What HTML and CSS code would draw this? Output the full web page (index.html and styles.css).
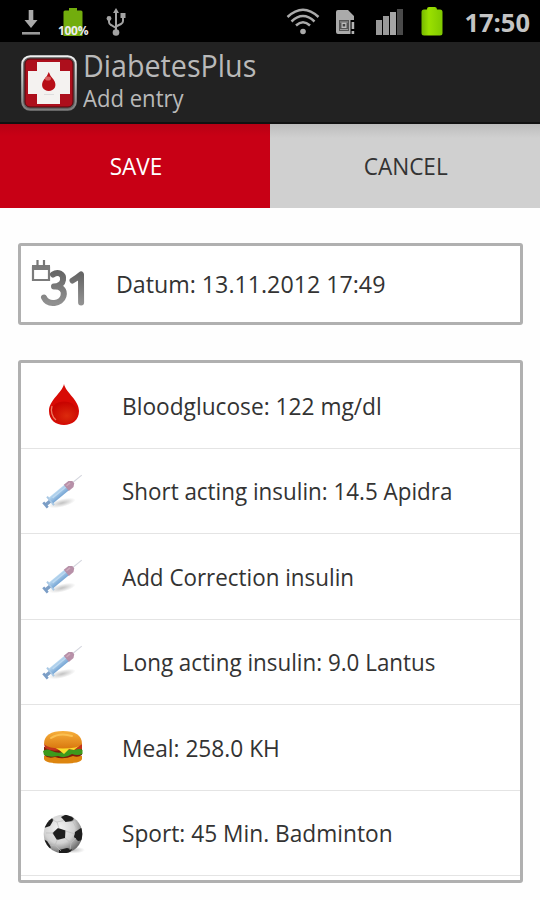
FILE: index.html
```html
<!DOCTYPE html>
<html lang="en">
<head>
    <meta charset="UTF-8">
    <meta name="viewport" content="width=device-width, initial-scale=1.0">
    <title>DiabetesPlus - Add entry</title>
    <link rel="stylesheet" href="styles.css">
</head>
<body>

    <!-- Shared icons and gradients -->
    <svg class="defs" width="0" height="0">
        <defs>
            <linearGradient id="green" x1="0" y1="0" x2="1" y2="0">
                <stop offset="0" stop-color="#76b900"/>
                <stop offset=".35" stop-color="#9be000"/>
                <stop offset="1" stop-color="#7fc800"/>
            </linearGradient>
            <linearGradient id="grey" x1="0" y1="0" x2="0" y2="1">
                <stop offset="0" stop-color="#666"/>
                <stop offset="1" stop-color="#909090"/>
            </linearGradient>
            <linearGradient id="frame" x1="0" y1="0" x2="0" y2="1">
                <stop offset="0" stop-color="#f0f0f0"/>
                <stop offset="1" stop-color="#7c7c7c"/>
            </linearGradient>
            <linearGradient id="barrel" x1="0" y1="0" x2="0" y2="1">
                <stop offset="0" stop-color="#b9d8f0"/>
                <stop offset="1" stop-color="#76a5d4"/>
            </linearGradient>
            <linearGradient id="bun" x1="0" y1="0" x2="0" y2="1">
                <stop offset="0" stop-color="#f7b03c"/>
                <stop offset="1" stop-color="#d9780f"/>
            </linearGradient>
            <radialGradient id="blood" cx=".6" cy=".65" r=".6">
                <stop offset="0" stop-color="#dc2a0c"/>
                <stop offset="1" stop-color="#c80400"/>
            </radialGradient>
            <radialGradient id="leather" cx=".4" cy=".35" r=".65">
                <stop offset="0" stop-color="#f4f4f4"/>
                <stop offset=".6" stop-color="#d2d2d2"/>
                <stop offset="1" stop-color="#707070"/>
            </radialGradient>
            <radialGradient id="shade">
                <stop offset="0" stop-color="#999" stop-opacity=".6"/>
                <stop offset="1" stop-color="#999" stop-opacity="0"/>
            </radialGradient>
            <clipPath id="ball"><circle cx="20" cy="20" r="19.3"/></clipPath>
            <symbol id="syringe" viewBox="0 0 42 38">
                <ellipse cx="20" cy="31" rx="14" ry="4" fill="url(#shade)" transform="rotate(-14 20 31)"/>
                <g transform="translate(3.5 33) rotate(-39.5)">
                    <path d="M33 0H47" stroke="#d3d5dd" stroke-width="1"/>
                    <path d="M0 0H8" stroke="#7d9fc6" stroke-width="3.5"/>
                    <path d="M0 -3.5V3.5" stroke="#7a9dc6" stroke-width="2.6"/>
                    <path d="M6.5 -5.5V5.5" stroke="#a9c8e4" stroke-width="2"/>
                    <rect x="7" y="-3.5" width="22" height="7" fill="url(#barrel)"/>
                    <path d="M10 -1H27" stroke="#bcd8f0" stroke-width="1.4"/>
                    <path d="M27 -4H33L36 -1.5V1.5L33 4H27Z" fill="#b790a8"/>
                    <path d="M28.5 -1.5H33" stroke="#cfaabb" stroke-width="1.5"/>
                </g>
            </symbol>
        </defs>
    </svg>

    <div class="status-bar">
        <div class="status-left">
            <svg class="icon-download" width="20" height="26" viewBox="0 0 20 26">
                <path d="M7.7 0H12.3V10H16.5L10 18L3.5 10H7.7Z" fill="#aaa"/>
                <rect x="1" y="22" width="18" height="2.6" fill="#999"/>
            </svg>
            <div class="battery-full">
                <svg width="20" height="28" viewBox="0 0 20 28">
                    <path d="M6 0H14V2.5H18Q19.500 2.500 19.500 4V28H.5V4Q.5 2.500 2 2.500H6Z" fill="#72ad0d"/>
                </svg>
                <span class="percent">100%</span>
            </div>
            <svg class="icon-usb" width="20" height="28" viewBox="0 0 20 28">
                <g fill="none" stroke="#a3a3a3" stroke-width="2">
                    <path d="M10 3V24"/>
                    <path d="M3 11V14Q3 16 5 17L10 20"/>
                    <path d="M17 8V13Q17 15 15 16L10 18.500"/>
                </g>
                <g fill="#a3a3a3">
                    <path d="M10 0L13 5H7Z"/>
                    <circle cx="10" cy="24.500" r="3.3"/>
                    <circle cx="3" cy="10.500" r="2.4"/>
                    <rect x="14.500" y="5" width="5" height="5"/>
                </g>
            </svg>
        </div>
        <div class="status-right">
            <svg class="icon-wifi" width="34" height="27" viewBox="0 0 34 27">
                <g fill="none" stroke="#aaa" stroke-width="2.5">
                    <path d="M1.500 9Q17 -5.500 32.500 9"/>
                    <path d="M5.500 13.500Q17 2.500 28.500 13.500"/>
                    <path d="M10 17.500Q17 11 24 17.500"/>
                </g>
                <circle cx="17" cy="23.500" r="2.800" fill="#aaa"/>
            </svg>
            <svg class="icon-sim" width="20" height="25" viewBox="0 0 20 25">
                <path d="M2 0H12L18 6V10H14.500V24H2Q0 24 0 22V2Q0 0 2 0Z" fill="#aaa"/>
                <rect x="3" y="10" width="10" height="11" fill="#555"/>
                <rect x="5.500" y="12.500" width="5" height="5.500" fill="#bbb"/>
                <path d="M4 12H12M4 19.500H12" stroke="#999"/>
                <rect x="6.700" y="14" width="2.500" height="2.500" fill="#444"/>
                <path d="M16.900 12V19M16.900 21V24" stroke="#b5b5b5" stroke-width="2.600"/>
            </svg>
            <svg class="icon-signal" width="27" height="26" viewBox="0 0 27 26">
                <rect x="0" y="11" width="6" height="15" fill="#999"/>
                <rect x="7" y="7" width="6" height="19" fill="#999"/>
                <rect x="14" y="3" width="6" height="23" fill="#a5a5a5"/>
                <rect x="21" y="0" width="6" height="26" fill="#4a4a4a"/>
            </svg>
            <svg class="icon-battery" width="22" height="29" viewBox="0 0 22 29">
                <path d="M6 2Q6 0 8 0H14Q16 0 16 2.500H19Q21.500 2.500 21.500 5V26Q21.500 28.500 19 28.500H3Q.5 28.500 .5 26V5Q.5 2.500 3 2.500H6Z" fill="url(#green)"/>
            </svg>
            <span class="clock">17:50</span>
        </div>
    </div>

    <div class="header">
        <svg class="logo" width="56" height="56" viewBox="0 0 56 56">
            <rect x="1.200" y="1.200" width="53.600" height="53.600" rx="8" fill="#5a5a5a" stroke="url(#frame)" stroke-width="2"/>
            <rect x="4" y="4" width="48" height="48" rx="5" fill="#ad0f1c" stroke="#50090d"/>
            <path d="M16 7H39V16H49V39H39V49H16V39H7V16H16Z" fill="#f4f2f0"/>
            <path d="M27.800 17Q29 21 32.500 24.500C37 31 33 36 27.800 36S18.500 31 23 24.500Q26.500 21 27.800 17Z" fill="#b80f18"/>
            <ellipse cx="27" cy="23.500" rx="3" ry="2" fill="#d96060"/>
            <path d="M23 39.500H33" stroke="#ddd"/>
        </svg>
        <div class="titles">
            <div class="title"><span class="fit fit-title">DiabetesPlus</span></div>
            <div class="subtitle"><span class="fit fit-subtitle">Add entry</span></div>
        </div>
    </div>

    <div class="actions">
        <button class="save"><span class="fit-button">SAVE</span></button>
        <button class="cancel"><span class="fit-button">CANCEL</span></button>
    </div>

    <div class="card date">
        <svg class="icon-date" width="56" height="50" viewBox="0 0 56 50">
            <path d="M2 9.500H18V22H2Z" fill="#fff" stroke="#7b7b7b" stroke-width="2.200"/>
            <path d="M1 7H19V12H1Z" fill="#7b7b7b"/>
            <path d="M6.500 2V9M13 2V9" stroke="#777" stroke-width="2.200"/>
            <g fill="none" stroke="url(#grey)" stroke-width="6" stroke-linecap="round" stroke-linejoin="round">
                <path d="M22 16.500C27 13 33 16 32 22C31.500 26 28 28 23 28.500C30 28 34 32 32.500 38C30.500 46 17 48 13 39.500"/>
                <path d="M41.500 22.500Q46 20 50 16.500L50.100 44.500"/>
            </g>
        </svg>
        <span class="fit fit-date">Datum: 13.11.2012 17:49</span>
    </div>

    <div class="card list">
        <div class="row">
            <svg class="icon" width="44" height="42" viewBox="0 0 44 42">
                <path d="M23 0C25 9 38 16 38 27C38 36 31 41 23 41S8 36 8 27C8 16 21 9 23 0Z" fill="#d80a05"/>
                <ellipse cx="23" cy="28.500" rx="13.500" ry="11" fill="url(#blood)"/>
                <path d="M11 22C9.500 27 11 33 15 36" fill="none" stroke="#ee7a60" stroke-width="1.300"/>
            </svg>
            <span class="fit fit-wide">Bloodglucose: 122 mg/dl</span>
        </div>
        <div class="row">
            <svg class="icon" width="44" height="38"><use href="#syringe"/></svg>
            <span class="fit fit-row">Short acting insulin: 14.5 Apidra</span>
        </div>
        <div class="row">
            <svg class="icon" width="44" height="38"><use href="#syringe"/></svg>
            <span class="fit fit-row">Add Correction insulin</span>
        </div>
        <div class="row">
            <svg class="icon" width="44" height="38"><use href="#syringe"/></svg>
            <span class="fit fit-row">Long acting insulin: 9.0 Lantus</span>
        </div>
        <div class="row">
            <svg class="icon" width="44" height="34" viewBox="0 0 44 34">
                <path d="M3 26H41V29Q40 33.500 22 33.500T3 29Z" fill="#dd850f"/>
                <path d="M3 17H41V25Q37 28 32 26Q22 30 14 27Q7 29 3 25Z" fill="#7d1c0b"/>
                <path d="M3 14Q21 20 41 14V19Q30 22 20 20Q10 22 4 18Z" fill="#c3351b"/>
                <path d="M2 21Q6 18 11 21Q17 24 22 22Q29 18 34 20Q38 18 41.500 20V24Q36 26 31 24Q24 29 17 26Q9 28 3 25Z" fill="#3c9a1c"/>
                <path d="M13 17L38 16L33 20L28 19L23 24L18 20Z" fill="#fbdc2c"/>
                <path d="M3 14C3 5 10 1 22 1S41 5 41 14Q37 18.500 22 18.500T3 14Z" fill="url(#bun)"/>
                <path d="M10 8Q19 2 31 6" fill="none" stroke="#fbc050" stroke-width="2" stroke-linecap="round"/>
            </svg>
            <span class="fit fit-wide">Meal: 258.0 KH</span>
        </div>
        <div class="row">
            <svg class="icon" width="44" height="40" viewBox="-2 -1 44 40">
                <ellipse cx="30" cy="36" rx="12" ry="3.500" fill="url(#shade)"/>
                <circle cx="20" cy="20" r="19.300" fill="url(#leather)"/>
                <g clip-path="url(#ball)" fill="#1e1e1e">
                    <path d="M9.500 19L15 14L22.500 16.500L22 24L14 26Z"/>
                    <path d="M18 3L24 0L31 2.500L30 7L22.500 8Z"/>
                    <path d="M32 18L38 14H40V26L35 27L31 23Z"/>
                    <path d="M1 14L3.500 8L8 3L10.500 6L7 12Z"/>
                    <path d="M0 25L4 27L8 33L6 36L0 30Z"/>
                    <path d="M16 36L24 34L29 35.500L26 40H16Z"/>
                    <path d="M22.500 17L32 20M16 14.500L14 8L9.500 6M14 8L21 6.500M14.500 25.500L12 31L7 32M12 31L18 37M22 24L28 29L27 36M28 29L33 24M29 6L34 15M10.500 19L3 19" fill="none" stroke="#bbb" stroke-width=".7"/>
                </g>
            </svg>
            <span class="fit fit-wide">Sport: 45 Min. Badminton</span>
        </div>
    </div>

</body>
</html>
```
FILE: styles.css
```css
* {
    box-sizing: border-box;
}
body {
    margin: 0;
    height: 900px;
    overflow: hidden;
    background: #fefefe;
    color: #333;
    font-family: "Open Sans", "Noto Sans", sans-serif;
    font-size: 24px;
}
svg {
    display: block;
    flex: none;
}
.defs {
    position: absolute;
}
/* condenses the text to the width of the phone font */
.fit {
    display: inline-block;
    white-space: nowrap;
    transform-origin: left center;
}
.fit-row {
    transform: scaleX(0.933);
}
.fit-wide {
    transform: scaleX(0.946);
}
.fit-date {
    transform: scaleX(0.967);
}
.fit-title {
    transform: scaleX(0.925);
}
.fit-subtitle {
    transform: scaleX(0.96);
}
.fit-button {
    display: inline-block;
    transform: scaleX(0.94);
}

.status-bar {
    display: flex;
    justify-content: space-between;
    height: 42px;
    padding: 0 10px 0 21px;
    background: #000;
}
.status-left, .status-right {
    display: flex;
    align-items: flex-start;
}
.icon-download {
    margin-top: 10px;
}
.battery-full {
    position: relative;
    margin: 8px 0 0 22px;
}
.percent {
    position: absolute;
    left: -5px;
    bottom: -1px;
    color: #eee;
    font-size: 12px;
    font-weight: 700;
    line-height: 13px;
    letter-spacing: -0.3px;
}
.icon-usb {
    margin: 8px 0 0 23px;
}
.icon-wifi {
    margin-top: 8px;
}
.icon-sim {
    margin: 10px 0 0 16px;
}
.icon-signal {
    margin: 9px 0 0 20px;
}
.icon-battery {
    margin: 7px 0 0 18px;
}
.clock {
    margin-left: 21px;
    color: #c4c4c4;
    font-size: 25.5px;
    font-weight: 700;
    line-height: 45px;
}

.header {
    display: flex;
    height: 82px;
    padding: 13px 0 0 21px;
    background: #222;
    border-bottom: 2px solid #111;
    color: #b9b9b9;
}
.titles {
    padding-left: 6px;
}
.title {
    height: 30px;
    margin-top: -5px;
    font-size: 31px;
    line-height: 31px;
}
.subtitle {
    font-size: 23px;
    line-height: 36px;
}

.actions {
    display: flex;
    height: 84px;
}
.actions button {
    flex: 1;
    padding: 0 0 2px 2px;
    border: none;
    font: inherit;
    font-size: 24px;
}
.save {
    background: linear-gradient(#b80014, #c80015 12px);
    color: #fff;
}
.cancel {
    background: linear-gradient(#bcbcbc, #d0d0d0 14px);
    color: #333;
}

.card {
    margin: 0 17px 0 18px;
    border: 3px solid #b0b0b0;
    border-radius: 3px;
    background: #fff;
}
.date {
    display: flex;
    align-items: center;
    height: 82px;
    margin-top: 35px;
    padding: 0 0 2px 10px;
}
.icon-date {
    margin-right: 29px;
}
.list {
    height: 523px;
    margin-top: 35px;
}
.row {
    display: flex;
    align-items: center;
    height: 85.5px;
    padding-left: 20px;
    border-bottom: 1px solid #e4e4e4;
}
.icon {
    margin-right: 37px;
}
```
